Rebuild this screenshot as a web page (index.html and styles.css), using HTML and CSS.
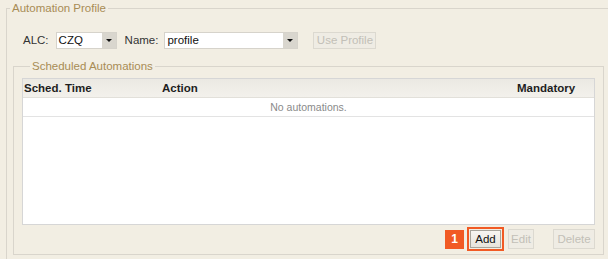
FILE: index.html
```html
<!DOCTYPE html>
<html lang="en">
  <head>
    <meta charset="UTF-8" />
    <meta name="viewport" content="width=device-width, initial-scale=1.0" />
    <title>Automation Profile</title>
    <link rel="stylesheet" href="styles.css">
  </head>
  <body>
    <fieldset class="profile">
      <legend>Automation Profile</legend>

      <div class="profile-row">
        <label>ALC:</label>
        <div class="combo combo-alc">
          <span class="combo-value">CZQ</span>
          <span class="combo-arrow"></span>
        </div>
        <label class="name-label">Name:</label>
        <div class="combo combo-name">
          <span class="combo-value">profile</span>
          <span class="combo-arrow"></span>
        </div>
        <button class="btn" disabled>Use Profile</button>
      </div>

      <fieldset class="scheduled">
        <legend>Scheduled Automations</legend>

        <div class="grid">
          <div class="grid-header">
            <div class="col-time">Sched. Time</div>
            <div class="col-action">Action</div>
            <div class="col-mandatory">Mandatory</div>
          </div>
          <div class="grid-empty">No automations.</div>
        </div>

        <div class="actions">
          <span class="step">1</span>
          <span class="highlight"><button class="btn">Add</button></span>
          <button class="btn btn-edit" disabled>Edit</button>
          <button class="btn btn-delete" disabled>Delete</button>
        </div>
      </fieldset>
    </fieldset>
  </body>
</html>
```

FILE: styles.css
```css
* {
  box-sizing: border-box;
}
body {
  margin: 0;
  background-color: #f2eee3;
  font-family: "Liberation Sans", Arial, sans-serif;
  font-size: 11px;
  color: #222;
  overflow: hidden;
}

fieldset {
  border: 1px solid #d9d5cc;
  margin: 0;
  min-width: 0;
}
legend {
  color: #a88c55;
  font-size: 11.5px;
  line-height: 16px;
  padding: 0 2px;
}

.profile {
  margin-left: 6px;
  width: 630px;
  padding: 15px 0 7px 0;
}
.profile > legend {
  margin-left: 3px;
}

.profile-row {
  display: flex;
  align-items: center;
  height: 18px;
  padding-left: 16px;
  margin-bottom: 9px;
  font-size: 11.5px;
  color: #333;
}
.profile-row label {
  margin-right: 7px;
}
.profile-row .name-label {
  margin-left: 8px;
  margin-right: 6px;
}

.combo {
  display: flex;
  height: 17px;
  border: 1px solid #d6d3cb;
  background: #fff;
}
.combo-alc {
  width: 61px;
}
.combo-name {
  width: 134px;
}
.combo-value {
  flex: 1;
  padding-left: 2px;
  line-height: 15px;
  color: #111;
}
.combo-arrow {
  width: 14px;
  background: #d9d6ce;
  position: relative;
}
.combo-arrow::after {
  content: "";
  position: absolute;
  left: 4px;
  top: 6px;
  border-left: 3px solid transparent;
  border-right: 3px solid transparent;
  border-top: 3px solid #111;
}

.btn {
  font-family: "Liberation Sans", Arial, sans-serif;
  font-size: 11px;
  height: 17px;
  padding: 0 5px;
  border: 1px solid #a8a59c;
  background: linear-gradient(#f8f6f1, #e7e4dc);
  color: #111;
  border-radius: 0;
  white-space: nowrap;
}
.btn:disabled {
  border-color: #dcd9d0;
  background: #efece4;
  color: #c2bfb7;
}
.profile-row .btn {
  margin-left: 15px;
  width: 63px;
  height: 17px;
  padding: 0;
  font-size: 11.5px;
}

.scheduled {
  margin-left: 6px;
  width: 591px;
  padding: 4px 8px 2px 8px;
}
.scheduled > legend {
  margin-left: 8px;
}

.grid {
  border: 1px solid #d6d6d6;
  background: #fff;
  height: 147px;
  font-family: "Liberation Sans Narrow", "Liberation Sans", Arial, sans-serif;
}
.grid-header {
  display: flex;
  height: 19px;
  align-items: center;
  background: linear-gradient(#ebe9e3, #f3f1ec);
  border-bottom: 1px solid #e2e0da;
  font-weight: bold;
  font-size: 11.5px;
  color: #1e1e1e;
}
.col-time {
  width: 139px;
  padding-left: 1px;
}
.col-action {
  flex: 1;
}
.col-mandatory {
  width: 77px;
}
.grid-empty {
  height: 19px;
  line-height: 18px;
  text-align: center;
  color: #8a8a8a;
  border-bottom: 1px solid #e3e3e3;
  font-size: 10.5px;
}

.actions {
  display: flex;
  justify-content: flex-end;
  align-items: center;
  height: 26px;
  margin-top: 1px;
}
.step {
  width: 19px;
  height: 19px;
  background: #f15a24;
  color: #fff;
  font-weight: bold;
  font-size: 12px;
  text-align: center;
  line-height: 19px;
  margin-right: 3px;
}
.highlight {
  display: flex;
  border: 2px solid #f15a24;
  padding: 1px;
}
.highlight .btn {
  height: 18px;
  width: 31px;
  padding: 0;
  font-size: 11.5px;
}
.btn-edit {
  margin-left: 4px;
  width: 26px;
  height: 20px;
  padding: 0;
  font-size: 11.5px;
}
.btn-delete {
  margin-left: 19px;
  width: 42px;
  height: 20px;
  padding: 0;
  font-size: 11.5px;
}
```
